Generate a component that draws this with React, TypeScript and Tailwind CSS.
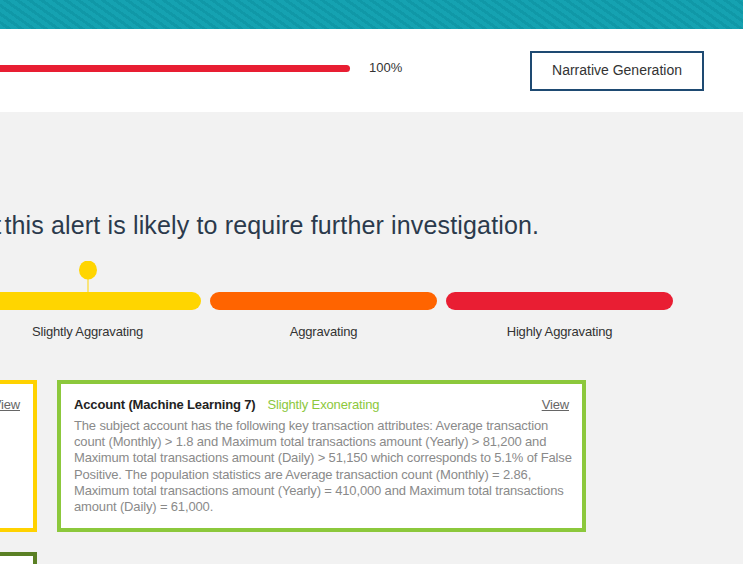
import { FC } from 'react';

const segments = [
  { label: 'Slightly Aggravating', color: 'bg-[#ffd500]' },
  { label: 'Aggravating', color: 'bg-[#ff6400]' },
  { label: 'Highly Aggravating', color: 'bg-[#e91e33]' },
];

interface CardProps {
  title: string;
  tag: string;
  tagColor: string;
  border: string;
  body: string;
}

const FactorCard: FC<CardProps> = ({ title, tag, tagColor, border, body }) => {
  return (
    <div className={`w-[529px] h-[152px] shrink-0 bg-white border-4 ${border} p-[13px] tracking-[-0.15px]`}>
      <div className="flex items-baseline text-[13px] leading-[16px]">
        <span className="font-bold text-[#222]">{title}</span>
        <span className={`ml-[12px] ${tagColor}`}>{tag}</span>
        <a href="#" className="ml-auto underline text-[#666]">View</a>
      </div>
      <p className="mt-[5px] -mr-[8px] text-[13px] leading-[16.2px] text-[#8a8a8a]">{body}</p>
    </div>
  );
};

const App: FC = () => {
  return (
    <div className="w-[743px] h-[564px] overflow-hidden bg-[#f2f2f2] font-['Liberation_Sans',Arial,sans-serif]">
      {/* striped top band */}
      <div className="h-[29px] bg-[#14a0af] bg-[repeating-linear-gradient(35deg,#15a2b1_0px,#15a2b1_4px,#1098a7_4px,#1098a7_7px)]" />

      {/* progress + action */}
      <div className="h-[83px] bg-white flex items-center">
        <div className="w-[350px] h-[7px] bg-[#e81e32] rounded-r-full mb-[4px]" />
        <span className="ml-[19px] mb-[6px] text-[13px] text-[#333]">100%</span>
        <button className="ml-auto mr-[39px] w-[174px] h-[40px] border-2 border-[#1e4a72] bg-white text-[14px] text-[#333]">
          Narrative Generation
        </button>
      </div>

      <div className="pt-[98px]">
        <h1 className="-ml-[41px] whitespace-nowrap text-[25px] leading-[30px] tracking-[0.15px] text-[#2b3a4c]">
          <span className="-mr-[4px]">that </span>this alert is likely to require further investigation.
        </h1>

        {/* scale */}
        <div className="relative mt-[21px] pt-[31px]">
          <svg className="absolute left-[79px] top-0" width="18" height="31" viewBox="0 0 18 31">
            <line x1="9" y1="17" x2="9" y2="31" stroke="#ffd500" strokeWidth="1" />
            <ellipse cx="9" cy="9" rx="9" ry="9.5" fill="#ffd500" />
          </svg>
          <div className="flex gap-[9px] -ml-[26px]">
            {segments.map((s) => (
              <div key={s.label} className={`w-[227px] h-[18px] shrink-0 rounded-full ${s.color}`} />
            ))}
          </div>
          <div className="flex gap-[9px] -ml-[26px] mt-[14px]">
            {segments.map((s) => (
              <div key={s.label} className="w-[227px] shrink-0 text-center text-[13px] leading-[16px] tracking-[-0.15px] text-[#333]">
                {s.label}
              </div>
            ))}
          </div>
        </div>

        {/* factor cards */}
        <div className="mt-[40px] -ml-[492px] flex flex-col gap-[20px]">
          <div className="flex gap-[20px]">
            <FactorCard
              title="Account (Machine Learning 5)"
              tag="Slightly Aggravating"
              tagColor="text-[#f5c400]"
              border="border-[#ffd200]"
              body="The subject account has a high number of cash deposits."
            />
            <FactorCard
              title="Account (Machine Learning 7)"
              tag="Slightly Exonerating"
              tagColor="text-[#8cc83c]"
              border="border-[#8cc83c]"
              body="The subject account has the following key transaction attributes: Average transaction count (Monthly) > 1.8 and Maximum total transactions amount (Yearly) > 81,200 and Maximum total transactions amount (Daily) > 51,150 which corresponds to 5.1% of False Positive. The population statistics are Average transaction count (Monthly) = 2.86, Maximum total transactions amount (Yearly) = 410,000 and Maximum total transactions amount (Daily) = 61,000."
            />
          </div>
          <div className="flex gap-[20px]">
            <FactorCard
              title="Customer (Machine Learning 2)"
              tag="Exonerating"
              tagColor="text-[#5a8024]"
              border="border-[#5a8024]"
              body="The subject customer has few linked accounts."
            />
          </div>
        </div>
      </div>
    </div>
  );
};

export default App;
